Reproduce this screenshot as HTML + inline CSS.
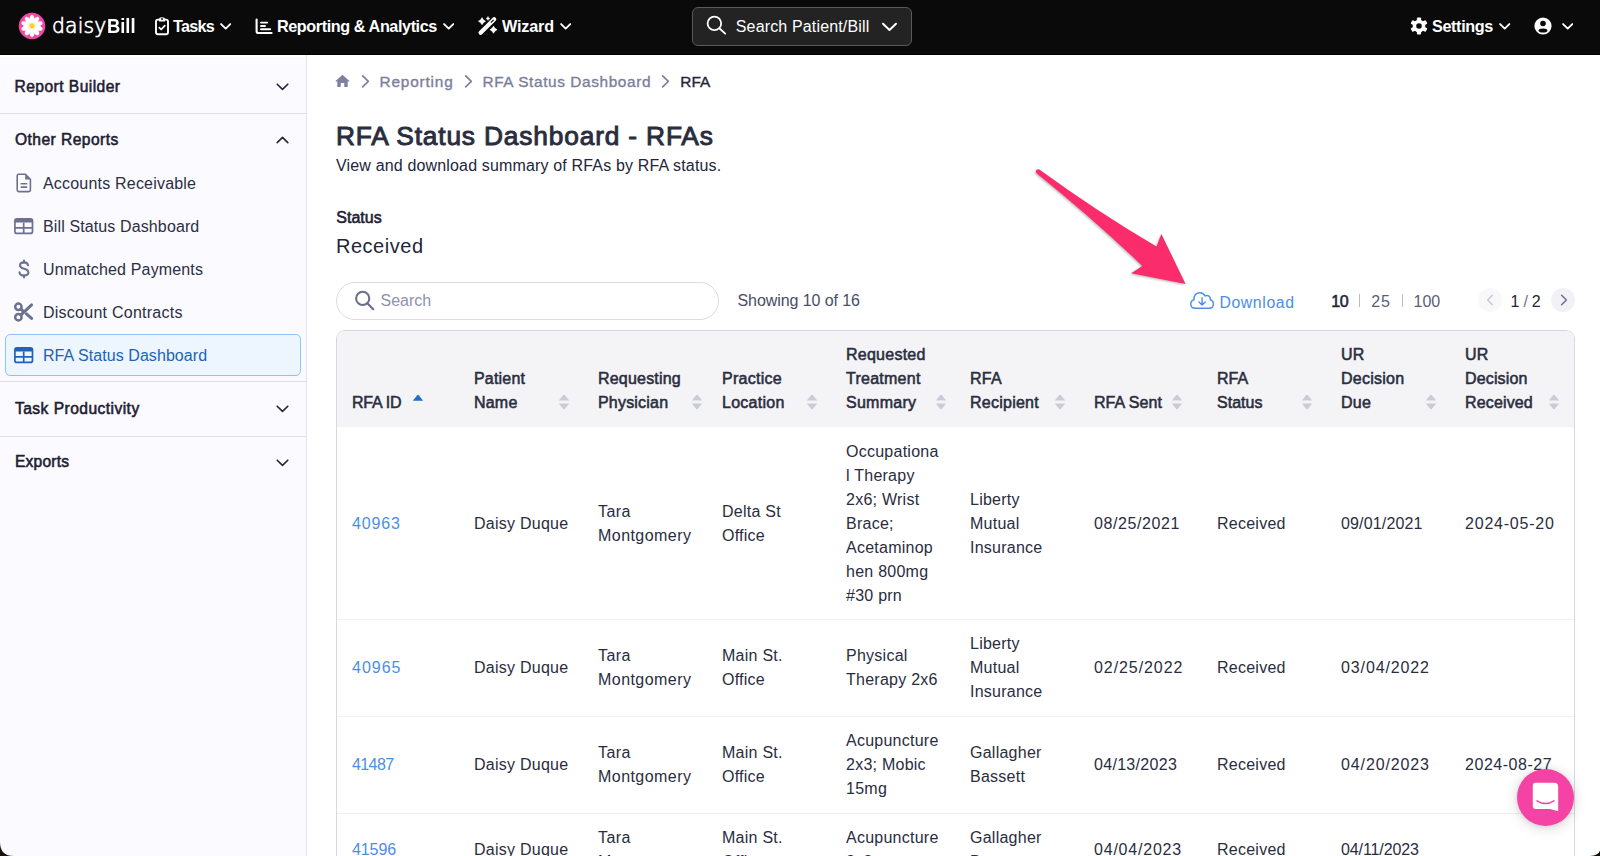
<!DOCTYPE html>
<html lang="en">
<head>
<meta charset="utf-8">
<title>RFA Status Dashboard - RFAs</title>
<style>
*{box-sizing:border-box;margin:0;padding:0}
html,body{width:1600px;height:856px;overflow:hidden;background:#fff}
body{font-family:"Liberation Sans",Arial,sans-serif;font-size:16px;color:#23263a;position:relative}
svg{display:block}
a{text-decoration:none;color:inherit}

/* ---------- NAVBAR ---------- */
#nav{position:absolute;left:0;top:0;width:1600px;height:54.5px;background:#0a0a0a;border-bottom:1.5px solid #000;color:#fff;z-index:5}
#nav .it{position:absolute;top:0;height:53px;display:flex;align-items:center;font-weight:700;font-size:16.2px;white-space:nowrap}
#nav .it svg{position:absolute}
#nav .ab{position:absolute}
#logo-t{position:absolute;left:0;top:0;color:#fff}
#lg1{position:absolute;left:52px;top:10.9px;font-family:"DejaVu Sans","Liberation Sans",sans-serif;font-weight:200;font-size:20.4px;line-height:30px;letter-spacing:.1px;-webkit-text-stroke:.65px #fff}
#lg2{position:absolute;left:106.9px;top:11.3px;font-weight:700;font-size:20.4px;line-height:30px;display:inline-block;transform-origin:0 50%;transform:scaleX(.9)}
#nsearch{position:absolute;left:691.8px;top:7.3px;width:220.2px;height:38.4px;border:1.2px solid #5a5a5a;border-radius:6px;background:#232323}
#nsearch span{position:absolute;left:43px;top:0;line-height:37.6px;font-size:16px;letter-spacing:.15px;color:#fff}

/* ---------- SIDEBAR ---------- */
#side{position:absolute;left:0;top:54px;width:307px;height:802px;background:#fafaff;border-right:1px solid #e3e3ea}
#side .sec{position:absolute;left:15px;font-weight:400;-webkit-text-stroke:.55px currentColor;font-size:15.6px;letter-spacing:.45px;line-height:20px;color:#1d2030;white-space:nowrap}
#side::before{content:"";position:absolute;left:0;top:0;width:306px;height:2.6px;background:#fff}
#side .hr{position:absolute;left:0;width:306px;height:1px;background:#dfe0e6}
#side .li{position:absolute;left:43px;font-size:16px;line-height:20px;letter-spacing:.2px;color:#2c2f42;white-space:nowrap}
#side .ic{position:absolute}
#side .chev{position:absolute;left:275.8px}
#active{position:absolute;left:5px;top:279.8px;width:295.8px;height:42.2px;border:1px solid #8fc4f8;border-radius:5px;background:#edf5fe}

/* ---------- MAIN ---------- */
#main{position:absolute;left:307px;top:54px;width:1293px;height:802px;background:#fff}
.abs{position:absolute;white-space:nowrap}
#crumb{position:absolute;left:0;top:0}
#crumb .c{position:absolute;top:17.5px;line-height:20px;font-size:15.4px;color:#7b7f9c;white-space:nowrap;letter-spacing:.6px;-webkit-text-stroke:.35px currentColor}
h1{position:absolute;left:28.9px;top:63.6px;font-size:26.3px;line-height:36px;font-weight:400;-webkit-text-stroke:.95px currentColor;letter-spacing:.84px;color:#2a2d3e;white-space:nowrap}
#sub{left:29px;top:102px;font-size:16px;line-height:20px;letter-spacing:.16px;color:#23263a}
#stl{left:29.3px;top:153.8px;font-size:16px;line-height:20px;font-weight:400;-webkit-text-stroke:.55px currentColor;color:#1d2030;letter-spacing:0}
#stv{left:28.9px;top:179.1px;font-size:20px;line-height:26px;letter-spacing:.55px;color:#23263a}
#sbox{position:absolute;left:29px;top:227.5px;width:382.6px;height:38.4px;border:1px solid #dadbe4;border-radius:20px;background:#fff}
#sbox span{position:absolute;left:43.5px;top:0;line-height:36.4px;font-size:16px;color:#8e92ab;letter-spacing:0}
#showing{left:430.5px;top:237.2px;font-size:16px;line-height:20px;letter-spacing:-.08px;color:#4a4d63}
#dl{left:912.4px;top:238.7px;font-size:15.8px;line-height:20px;color:#4a8fe7;letter-spacing:.62px}
.pg{font-size:16px;line-height:20px;top:237.6px;color:#5b5e75}

/* ---------- TABLE ---------- */
#tbl{position:absolute;left:29px;top:275.5px;width:1239px;height:600px;border:1px solid #d6d8e1;border-radius:9px 9px 0 0;overflow:hidden;background:#fff}
#thead{position:absolute;left:0;top:0;width:1237px;height:96px;background:#f4f4f7}
#thead + .row{border-top-color:transparent}
.th{position:absolute;font-weight:400;-webkit-text-stroke:.55px currentColor;font-size:16px;line-height:24px;color:#2a2d3e;white-space:nowrap;margin-top:1.2px}
.sort{position:absolute;top:63.5px}
.row{position:absolute;left:0;width:1237px;border-top:1px solid #efeff4}
.td{position:absolute;font-size:16px;line-height:24px;color:#2a2d3e;white-space:nowrap;letter-spacing:.25px}
.td.lnk{color:#4a8fe7}
</style>
</head>
<body>

<!-- NAVBAR -->
<div id="nav">
  <svg class="ab" style="left:18px;top:12.1px" width="28" height="28" viewBox="0 0 28 28">
    <circle cx="14" cy="14" r="13.25" fill="#f548a5"/>
    <g fill="#fff" transform="translate(14 14)"><ellipse cx="0" cy="-6.1" rx="2.5" ry="4.9" transform="rotate(0)"/><ellipse cx="0" cy="-6.1" rx="2.5" ry="4.9" transform="rotate(36)"/><ellipse cx="0" cy="-6.1" rx="2.5" ry="4.9" transform="rotate(72)"/><ellipse cx="0" cy="-6.1" rx="2.5" ry="4.9" transform="rotate(108)"/><ellipse cx="0" cy="-6.1" rx="2.5" ry="4.9" transform="rotate(144)"/><ellipse cx="0" cy="-6.1" rx="2.5" ry="4.9" transform="rotate(180)"/><ellipse cx="0" cy="-6.1" rx="2.5" ry="4.9" transform="rotate(216)"/><ellipse cx="0" cy="-6.1" rx="2.5" ry="4.9" transform="rotate(252)"/><ellipse cx="0" cy="-6.1" rx="2.5" ry="4.9" transform="rotate(288)"/><ellipse cx="0" cy="-6.1" rx="2.5" ry="4.9" transform="rotate(324)"/><circle r="4" fill="#ffe9f4"/></g>
    <circle cx="14" cy="14" r="2.5" fill="#ffd41c"/>
  </svg>
  <div id="logo-t"><span id="lg1">daisy</span><span id="lg2">Bill</span></div>


  <!-- clipboard-check -->
  <svg class="ab" style="left:154px;top:16px" width="16" height="20" viewBox="0 0 16 20">
    <rect x="2" y="3.6" width="12" height="14.6" rx="2" fill="none" stroke="#fff" stroke-width="1.9"/>
    <path d="M5 3.6 Q5 1.2 8 1.2 Q11 1.2 11 3.6 L11 5.4 L5 5.4Z" fill="#fff"/>
    <circle cx="8" cy="3" r=".9" fill="#0b0b0b"/>
    <path d="M5.3 11.6 L7.2 13.5 L10.8 9.6" fill="none" stroke="#fff" stroke-width="1.7" stroke-linecap="round" stroke-linejoin="round"/>
  </svg>
  <svg class="ab" style="left:219.8px;top:22.7px" width="11.4" height="7" viewBox="0 0 11.4 7"><path d="M1.1 1.1 L5.7 5.6 L10.3 1.1" fill="none" stroke="#fff" stroke-width="1.9" stroke-linecap="round" stroke-linejoin="round"/></svg>
  <!-- chart bars -->
  <svg class="ab" style="left:254px;top:16.6px" width="20" height="20" viewBox="0 0 20 20">
    <path d="M2.6 2.6 L2.6 14.2 Q2.6 16 4.4 16 L17.6 16" fill="none" stroke="#fff" stroke-width="2.1" stroke-linecap="round"/>
    <path d="M7 5.6 L13.2 5.6 M7 9 L11 9 M7 12.3 L16.2 12.3" fill="none" stroke="#fff" stroke-width="1.9" stroke-linecap="round"/>
  </svg>
  <svg class="ab" style="left:442.8px;top:22.7px" width="11.4" height="7" viewBox="0 0 11.4 7"><path d="M1.1 1.1 L5.7 5.6 L10.3 1.1" fill="none" stroke="#fff" stroke-width="1.9" stroke-linecap="round" stroke-linejoin="round"/></svg>
  <!-- magic wand -->
  <svg class="ab" style="left:476px;top:15px" width="22" height="22" viewBox="0 0 22 22">
    <path d="M4.6 17.8 L18.2 4.2" stroke="#fff" stroke-width="4.2" stroke-linecap="round"/>
    <path d="M15.3 7.1 L17.3 5.1" stroke="#0b0b0b" stroke-width="1.3" stroke-linecap="round"/>
    <path d="M6 2.6 Q7.008 5.192 9.6 6.2 Q7.008 7.208 6 9.8 Q4.992 7.208 2.4 6.2 Q4.992 5.192 6 2.6Z" fill="#fff" stroke="#fff" stroke-width=".5" stroke-linejoin="round"/>
    <path d="M12 1.6 Q12.532 2.968 13.9 3.5 Q12.532 4.032 12 5.4 Q11.468 4.032 10.1 3.5 Q11.468 2.968 12 1.6Z" fill="#fff" stroke="#fff" stroke-width=".5" stroke-linejoin="round"/>
    <path d="M17.5 11.1 Q18.508 13.691999999999998 21.1 14.7 Q18.508 15.708 17.5 18.3 Q16.492 15.708 13.9 14.7 Q16.492 13.691999999999998 17.5 11.1Z" fill="#fff" stroke="#fff" stroke-width=".5" stroke-linejoin="round"/>
  </svg>
  <svg class="ab" style="left:559.8px;top:22.7px" width="11.4" height="7" viewBox="0 0 11.4 7"><path d="M1.1 1.1 L5.7 5.6 L10.3 1.1" fill="none" stroke="#fff" stroke-width="1.9" stroke-linecap="round" stroke-linejoin="round"/></svg>
  <!-- gear -->
  <svg class="ab" style="left:1409px;top:16px" width="20" height="20" viewBox="-10 -10 20 20">
    <g fill="#fff">
      <circle r="6.3"/>
      <rect x="-2.1" y="-8.6" width="4.2" height="17.2" rx="1"/>
      <rect x="-2.1" y="-8.6" width="4.2" height="17.2" rx="1" transform="rotate(60)"/>
      <rect x="-2.1" y="-8.6" width="4.2" height="17.2" rx="1" transform="rotate(120)"/>
    </g>
    <circle r="2.8" fill="#0b0b0b"/>
  </svg>
  <svg class="ab" style="left:1499.3px;top:22.9px" width="11.4" height="7" viewBox="0 0 11.4 7"><path d="M1.1 1.1 L5.7 5.6 L10.3 1.1" fill="none" stroke="#fff" stroke-width="1.9" stroke-linecap="round" stroke-linejoin="round"/></svg>
  <!-- user -->
  <svg class="ab" style="left:1533px;top:16px" width="20" height="20" viewBox="-10 -10 20 20">
    <circle r="8.6" fill="#fff"/>
    <circle cy="-2.5" r="2.8" fill="#0b0b0b"/>
    <ellipse cy="4.5" rx="4.4" ry="2" fill="#0b0b0b"/>
  </svg>
  <svg class="ab" style="left:1561.9px;top:22.9px" width="11.4" height="7" viewBox="0 0 11.4 7"><path d="M1.1 1.1 L5.7 5.6 L10.3 1.1" fill="none" stroke="#fff" stroke-width="1.9" stroke-linecap="round" stroke-linejoin="round"/></svg>
  <div class="it" style="left:173px;letter-spacing:-.75px">Tasks</div>
  <div class="it" style="left:277px;letter-spacing:-.41px">Reporting &amp; Analytics</div>
  <div class="it" style="left:502px;letter-spacing:-.17px">Wizard</div>
  <div id="nsearch">
    <svg class="ab" style="left:12.4px;top:5.1px" width="24" height="24" viewBox="0 0 24 24"><circle cx="9.4" cy="10.4" r="6.8" fill="none" stroke="#fff" stroke-width="1.8"/><path d="M14.3 15.3 L20.2 20.6" stroke="#fff" stroke-width="1.9" stroke-linecap="round"/></svg>
    <span>Search Patient/Bill</span>
    <svg class="ab" style="left:188px;top:14px" width="17" height="11" viewBox="0 0 17 11"><path d="M2 1.7 L8.5 8 L15 1.7" fill="none" stroke="#fff" stroke-width="2" stroke-linecap="round" stroke-linejoin="round"/></svg>
  </div>
  <div class="it" style="left:1432px;letter-spacing:-.36px">Settings</div>
</div>

<!-- SIDEBAR -->
<div id="side">

  <svg class="chev" style="top:28.5px" width="13" height="8" viewBox="0 0 13 8"><path d="M1.2 1.2 L6.5 6.4 L11.8 1.2" fill="none" stroke="#23263a" stroke-width="1.6" stroke-linecap="round" stroke-linejoin="round"/></svg>
  <svg class="chev" style="top:81.5px" width="13" height="8" viewBox="0 0 13 8"><path d="M1.2 6.6 L6.5 1.4 L11.8 6.6" fill="none" stroke="#23263a" stroke-width="1.6" stroke-linecap="round" stroke-linejoin="round"/></svg>
  <svg class="chev" style="top:351px" width="13" height="8" viewBox="0 0 13 8"><path d="M1.2 1.2 L6.5 6.4 L11.8 1.2" fill="none" stroke="#23263a" stroke-width="1.6" stroke-linecap="round" stroke-linejoin="round"/></svg>
  <svg class="chev" style="top:405px" width="13" height="8" viewBox="0 0 13 8"><path d="M1.2 1.2 L6.5 6.4 L11.8 1.2" fill="none" stroke="#23263a" stroke-width="1.6" stroke-linecap="round" stroke-linejoin="round"/></svg>
  <!-- document -->
  <svg class="ic" style="left:16px;top:119px" width="16" height="20" viewBox="0 0 16 20"><path d="M2.8 1.2 L9.4 1.2 L14.4 6.2 L14.4 17 Q14.4 18.6 12.8 18.6 L2.8 18.6 Q1.2 18.6 1.2 17 L1.2 2.8 Q1.2 1.2 2.8 1.2Z" fill="none" stroke="#6d7190" stroke-width="1.6" stroke-linejoin="round"/><path d="M9.2 1.4 L9.2 6.4 L14.2 6.4Z" fill="#6d7190"/><path d="M5.2 10.7 L10.6 10.7 M5.2 14.1 L10.6 14.1" stroke="#6d7190" stroke-width="1.6" stroke-linecap="round"/></svg>
  <svg class="ic" style="left:14.2px;top:163.6px" width="19.4" height="17" viewBox="0 0 19.4 17"><rect x=".9" y=".9" width="17.6" height="14.5" rx="2" fill="none" stroke="#6d7190" stroke-width="1.7"/><path d="M.9 2.9 Q.9 .9 2.9 .9 L16.5 .9 Q18.5 .9 18.5 2.9 L18.5 4.5 L.9 4.5Z" fill="#6d7190"/><path d="M9.7 4.4 L9.7 15.2 M.9 9.9 L18.5 9.9" stroke="#6d7190" stroke-width="1.7"/></svg>
  <!-- dollar -->
  <svg class="ic" style="left:17px;top:205px" width="14" height="20" viewBox="0 0 14 20"><path d="M11 6.3 Q10.6 3.4 7 3.4 Q3 3.4 3 6.3 Q3 8.8 7 9.7 Q11.4 10.7 11.4 13.6 Q11.4 16.6 7 16.6 Q2.8 16.6 2.5 13.4" fill="none" stroke="#6d7190" stroke-width="2.1" stroke-linecap="round"/><path d="M7 1.6 L7 3.6 M7 16.4 L7 18.4" stroke="#6d7190" stroke-width="2" stroke-linecap="round"/></svg>
  <!-- scissors -->
  <svg class="ic" style="left:13px;top:247px" width="22" height="22" viewBox="0 0 22 22"><circle cx="5.4" cy="5.8" r="3.2" fill="none" stroke="#6d7190" stroke-width="2.5"/><circle cx="5.4" cy="16.2" r="3.2" fill="none" stroke="#6d7190" stroke-width="2.5"/><path d="M8 13.8 L18.6 3.9" stroke="#6d7190" stroke-width="3" stroke-linecap="round"/><path d="M8 8.2 L10.6 10.7 M13.4 12.9 L18.6 17.4" stroke="#6d7190" stroke-width="3" stroke-linecap="round"/></svg>
  <div class="sec" style="top:22.6px;left:14.5px">Report Builder</div>
  <div class="hr" style="top:59px"></div>
  <div class="sec" style="top:76px">Other Reports</div>
  <div class="li" style="top:119.6px">Accounts Receivable</div>
  <div class="li" style="top:163.1px;letter-spacing:.12px">Bill Status Dashboard</div>
  <div class="li" style="top:206px;letter-spacing:.15px">Unmatched Payments</div>
  <div class="li" style="top:248.8px;letter-spacing:.25px">Discount Contracts</div>
  <div id="active"></div>
  <svg class="ic" style="left:14.2px;top:292.9px" width="19.4" height="17" viewBox="0 0 19.4 17"><rect x=".9" y=".9" width="17.6" height="14.5" rx="2" fill="none" stroke="#1f63b8" stroke-width="1.7"/><path d="M.9 2.9 Q.9 .9 2.9 .9 L16.5 .9 Q18.5 .9 18.5 2.9 L18.5 4.5 L.9 4.5Z" fill="#1f63b8"/><path d="M9.7 4.4 L9.7 15.2 M.9 9.9 L18.5 9.9" stroke="#1f63b8" stroke-width="1.7"/></svg>
  <div class="li" style="top:292.3px;color:#1b63b8;letter-spacing:.07px">RFA Status Dashboard</div>
  <div class="hr" style="top:327.2px"></div>
  <div class="sec" style="top:345px">Task Productivity</div>
  <div class="hr" style="top:381.5px"></div>
  <div class="sec" style="top:398px;letter-spacing:.2px">Exports</div>
</div>

<!-- MAIN -->
<div id="main">
  <div id="crumb">
    <svg class="abs" style="left:28.2px;top:20px" width="15" height="14" viewBox="0 0 15 14"><path d="M7.5 .8 L14.4 7 Q14.7 7.6 14 7.6 L12.7 7.6 L12.7 12.4 Q12.7 13 12.1 13 L9.3 13 L9.3 9 L5.7 9 L5.7 13 L2.9 13 Q2.3 13 2.3 12.4 L2.3 7.6 L1 7.6 Q.3 7.6 .6 7Z" fill="#7d819e"/></svg>
    <svg class="abs" style="left:54px;top:19.6px" width="10" height="15" viewBox="0 0 10 15"><path d="M1.7 1.8 L7.3 7.3 L1.7 12.8" fill="none" stroke="#7d819e" stroke-width="1.7" stroke-linecap="round" stroke-linejoin="round"/></svg>
    <svg class="abs" style="left:157px;top:19.6px" width="10" height="15" viewBox="0 0 10 15"><path d="M1.7 1.8 L7.3 7.3 L1.7 12.8" fill="none" stroke="#7d819e" stroke-width="1.7" stroke-linecap="round" stroke-linejoin="round"/></svg>
    <svg class="abs" style="left:354.4px;top:19.6px" width="10" height="15" viewBox="0 0 10 15"><path d="M1.7 1.8 L7.3 7.3 L1.7 12.8" fill="none" stroke="#7d819e" stroke-width="1.7" stroke-linecap="round" stroke-linejoin="round"/></svg>
    <span class="c" style="left:72.6px;letter-spacing:.8px">Reporting</span>
    <span class="c" style="left:175.5px">RFA Status Dashboard</span>
    <span class="c" style="left:373.2px;color:#23263a;letter-spacing:.1px">RFA</span>
  </div>
  <h1>RFA Status Dashboard - RFAs</h1>
  <div class="abs" id="sub">View and download summary of RFAs by RFA status.</div>
  <div class="abs" id="stl">Status</div>
  <div class="abs" id="stv">Received</div>
  <div id="sbox"><svg class="abs" style="left:17px;top:7.6px" width="22" height="22" viewBox="0 0 22 22"><circle cx="8.7" cy="8.4" r="6.6" fill="none" stroke="#6b6f8e" stroke-width="2.1"/><path d="M13.6 13.4 L19.2 19.2" stroke="#6b6f8e" stroke-width="2.2" stroke-linecap="round"/></svg><span>Search</span></div>
  <div class="abs" id="showing">Showing 10 of 16</div>
  <svg class="abs" style="left:882px;top:236.5px" width="26" height="20" viewBox="0 0 26 20"><path d="M6.4 17.3 Q1.8 17.3 1.8 13 Q1.8 9.6 5 8.8 Q4.8 2.2 10.6 1.8 Q14.4 1.6 16 5 Q18.4 3.6 20.4 5.6 Q21.8 7 21.2 8.8 Q24.4 9.6 24.4 13 Q24.4 17.3 19.8 17.3Z" fill="none" stroke="#4a8fe7" stroke-width="1.4" stroke-linejoin="round"/><path d="M13.1 6.8 L13.1 13.8 M10 11 L13.1 14.1 L16.2 11" fill="none" stroke="#4a8fe7" stroke-width="1.4" stroke-linecap="round" stroke-linejoin="round"/></svg>
  <div class="abs" id="dl">Download</div>
  <div class="abs pg" style="left:1024.3px;-webkit-text-stroke:.55px currentColor;color:#23263a;letter-spacing:-.5px">10</div>
  <div class="abs" style="left:1052px;top:240.4px;width:1.1px;height:12.2px;background:#b9bbc9;font-size:0">|</div>
  <div class="abs pg" style="left:1064.3px;letter-spacing:.7px">25</div>
  <div class="abs" style="left:1094.7px;top:240.4px;width:1.1px;height:12.2px;background:#b9bbc9;font-size:0">|</div>
  <div class="abs pg" style="left:1106.5px">100</div>
  <div class="abs" style="left:1171px;top:234.4px;width:24px;height:24px;border-radius:12px;background:#f8f8fa"><svg style="margin:6px 0 0 7.5px" width="8" height="12" viewBox="0 0 8 12"><path d="M6.4 1.2 L1.6 6 L6.4 10.8" fill="none" stroke="#c6c8d4" stroke-width="1.4" stroke-linecap="round" stroke-linejoin="round"/></svg></div>
  <div class="abs pg" style="left:1203.5px;color:#23263a">1<span style="color:#6d7190;margin:0 4px">/</span>2</div>
  <div class="abs" style="left:1244px;top:234.4px;width:24px;height:24px;border-radius:12px;background:#f2f2f6"><svg style="margin:6px 0 0 8.5px" width="8" height="12" viewBox="0 0 8 12"><path d="M1.6 1.2 L6.4 6 L1.6 10.8" fill="none" stroke="#6d7190" stroke-width="1.5" stroke-linecap="round" stroke-linejoin="round"/></svg></div>

  <div id="tbl">
    <div id="thead">
    <div class="th" style="left:15px;top:59px;letter-spacing:-0.24px">RFA ID</div>
    <div class="th" style="left:137px;top:35px;letter-spacing:0.2px">Patient<br>Name</div>
    <div class="th" style="left:261px;top:35px;letter-spacing:0.2px">Requesting<br>Physician</div>
    <div class="th" style="left:385px;top:35px;letter-spacing:0.27px">Practice<br>Location</div>
    <div class="th" style="left:509px;top:11px;letter-spacing:0.25px">Requested<br>Treatment<br>Summary</div>
    <div class="th" style="left:633px;top:35px;letter-spacing:0.25px">RFA<br>Recipient</div>
    <div class="th" style="left:757px;top:59px;letter-spacing:0.04px">RFA Sent</div>
    <div class="th" style="left:880px;top:35px;letter-spacing:0.03px">RFA<br>Status</div>
    <div class="th" style="left:1004px;top:11px;letter-spacing:0.25px">UR<br>Decision<br>Due</div>
    <div class="th" style="left:1128px;top:11px;letter-spacing:0.15px">UR<br>Decision<br>Received</div>
    <svg class="sort" style="left:75px;top:63px" width="12" height="7" viewBox="0 0 12 7"><path d="M1.2 6.2 L5.3 1.2 Q6 .5 6.7 1.2 L10.8 6.2 Q11.2 6.8 10.3 6.8 L1.7 6.8 Q.8 6.8 1.2 6.2Z" fill="#1f6fc5"/></svg>
    <svg class="sort" style="left:221.4px;top:63px" width="12" height="16" viewBox="0 0 12 16"><path d="M1.2 6 L5.3 1 Q6 .3 6.7 1 L10.8 6 Q11.2 6.6 10.3 6.6 L1.7 6.6 Q.8 6.6 1.2 6Z" fill="#cbcbd8"/><path d="M1.2 10 L5.3 15 Q6 15.7 6.7 15 L10.8 10 Q11.2 9.4 10.3 9.4 L1.7 9.4 Q.8 9.4 1.2 10Z" fill="#cbcbd8"/></svg>
    <svg class="sort" style="left:354.4px;top:63px" width="12" height="16" viewBox="0 0 12 16"><path d="M1.2 6 L5.3 1 Q6 .3 6.7 1 L10.8 6 Q11.2 6.6 10.3 6.6 L1.7 6.6 Q.8 6.6 1.2 6Z" fill="#cbcbd8"/><path d="M1.2 10 L5.3 15 Q6 15.7 6.7 15 L10.8 10 Q11.2 9.4 10.3 9.4 L1.7 9.4 Q.8 9.4 1.2 10Z" fill="#cbcbd8"/></svg>
    <svg class="sort" style="left:469.0px;top:63px" width="12" height="16" viewBox="0 0 12 16"><path d="M1.2 6 L5.3 1 Q6 .3 6.7 1 L10.8 6 Q11.2 6.6 10.3 6.6 L1.7 6.6 Q.8 6.6 1.2 6Z" fill="#cbcbd8"/><path d="M1.2 10 L5.3 15 Q6 15.7 6.7 15 L10.8 10 Q11.2 9.4 10.3 9.4 L1.7 9.4 Q.8 9.4 1.2 10Z" fill="#cbcbd8"/></svg>
    <svg class="sort" style="left:597.8px;top:63px" width="12" height="16" viewBox="0 0 12 16"><path d="M1.2 6 L5.3 1 Q6 .3 6.7 1 L10.8 6 Q11.2 6.6 10.3 6.6 L1.7 6.6 Q.8 6.6 1.2 6Z" fill="#cbcbd8"/><path d="M1.2 10 L5.3 15 Q6 15.7 6.7 15 L10.8 10 Q11.2 9.4 10.3 9.4 L1.7 9.4 Q.8 9.4 1.2 10Z" fill="#cbcbd8"/></svg>
    <svg class="sort" style="left:716.6px;top:63px" width="12" height="16" viewBox="0 0 12 16"><path d="M1.2 6 L5.3 1 Q6 .3 6.7 1 L10.8 6 Q11.2 6.6 10.3 6.6 L1.7 6.6 Q.8 6.6 1.2 6Z" fill="#cbcbd8"/><path d="M1.2 10 L5.3 15 Q6 15.7 6.7 15 L10.8 10 Q11.2 9.4 10.3 9.4 L1.7 9.4 Q.8 9.4 1.2 10Z" fill="#cbcbd8"/></svg>
    <svg class="sort" style="left:834.4px;top:63px" width="12" height="16" viewBox="0 0 12 16"><path d="M1.2 6 L5.3 1 Q6 .3 6.7 1 L10.8 6 Q11.2 6.6 10.3 6.6 L1.7 6.6 Q.8 6.6 1.2 6Z" fill="#cbcbd8"/><path d="M1.2 10 L5.3 15 Q6 15.7 6.7 15 L10.8 10 Q11.2 9.4 10.3 9.4 L1.7 9.4 Q.8 9.4 1.2 10Z" fill="#cbcbd8"/></svg>
    <svg class="sort" style="left:964.4px;top:63px" width="12" height="16" viewBox="0 0 12 16"><path d="M1.2 6 L5.3 1 Q6 .3 6.7 1 L10.8 6 Q11.2 6.6 10.3 6.6 L1.7 6.6 Q.8 6.6 1.2 6Z" fill="#cbcbd8"/><path d="M1.2 10 L5.3 15 Q6 15.7 6.7 15 L10.8 10 Q11.2 9.4 10.3 9.4 L1.7 9.4 Q.8 9.4 1.2 10Z" fill="#cbcbd8"/></svg>
    <svg class="sort" style="left:1088.4px;top:63px" width="12" height="16" viewBox="0 0 12 16"><path d="M1.2 6 L5.3 1 Q6 .3 6.7 1 L10.8 6 Q11.2 6.6 10.3 6.6 L1.7 6.6 Q.8 6.6 1.2 6Z" fill="#cbcbd8"/><path d="M1.2 10 L5.3 15 Q6 15.7 6.7 15 L10.8 10 Q11.2 9.4 10.3 9.4 L1.7 9.4 Q.8 9.4 1.2 10Z" fill="#cbcbd8"/></svg>
    <svg class="sort" style="left:1211.2px;top:63px" width="12" height="16" viewBox="0 0 12 16"><path d="M1.2 6 L5.3 1 Q6 .3 6.7 1 L10.8 6 Q11.2 6.6 10.3 6.6 L1.7 6.6 Q.8 6.6 1.2 6Z" fill="#cbcbd8"/><path d="M1.2 10 L5.3 15 Q6 15.7 6.7 15 L10.8 10 Q11.2 9.4 10.3 9.4 L1.7 9.4 Q.8 9.4 1.2 10Z" fill="#cbcbd8"/></svg>
    </div>
    <div class="row" style="top:96px;height:193px">
    <div class="td lnk" style="left:15px;top:84px;letter-spacing:0.87px">40963</div>
    <div class="td" style="left:137px;top:84px">Daisy Duque</div>
    <div class="td" style="left:261px;top:72px;letter-spacing:0.45px">Tara<br>Montgomery</div>
    <div class="td" style="left:385px;top:72px">Delta St<br>Office</div>
    <div class="td" style="left:509px;top:12px">Occupationa<br>l Therapy<br>2x6; Wrist<br>Brace;<br>Acetaminop<br>hen 800mg<br>#30 prn</div>
    <div class="td" style="left:633px;top:60px">Liberty<br>Mutual<br>Insurance</div>
    <div class="td" style="left:757px;top:84px;letter-spacing:0.58px">08/25/2021</div>
    <div class="td" style="left:880px;top:84px">Received</div>
    <div class="td" style="left:1004px;top:84px;letter-spacing:0.15px">09/01/2021</div>
    <div class="td" style="left:1128px;top:84px;letter-spacing:0.79px">2024-05-20</div>
    </div>
    <div class="row" style="top:288px;height:97px">
    <div class="td lnk" style="left:15px;top:36px;letter-spacing:1.0px">40965</div>
    <div class="td" style="left:137px;top:36px">Daisy Duque</div>
    <div class="td" style="left:261px;top:24px;letter-spacing:0.45px">Tara<br>Montgomery</div>
    <div class="td" style="left:385px;top:24px">Main St.<br>Office</div>
    <div class="td" style="left:509px;top:24px">Physical<br>Therapy 2x6</div>
    <div class="td" style="left:633px;top:12px">Liberty<br>Mutual<br>Insurance</div>
    <div class="td" style="left:757px;top:36px;letter-spacing:0.92px">02/25/2022</div>
    <div class="td" style="left:880px;top:36px">Received</div>
    <div class="td" style="left:1004px;top:36px;letter-spacing:0.88px">03/04/2022</div>
    </div>
    <div class="row" style="top:385px;height:97px">
    <div class="td lnk" style="left:15px;top:36px;letter-spacing:-0.6px">41487</div>
    <div class="td" style="left:137px;top:36px">Daisy Duque</div>
    <div class="td" style="left:261px;top:24px;letter-spacing:0.45px">Tara<br>Montgomery</div>
    <div class="td" style="left:385px;top:24px">Main St.<br>Office</div>
    <div class="td" style="left:509px;top:12px">Acupuncture<br>2x3; Mobic<br>15mg</div>
    <div class="td" style="left:633px;top:24px">Gallagher<br>Bassett</div>
    <div class="td" style="left:757px;top:36px;letter-spacing:0.3px">04/13/2023</div>
    <div class="td" style="left:880px;top:36px">Received</div>
    <div class="td" style="left:1004px;top:36px;letter-spacing:0.88px">04/20/2023</div>
    <div class="td" style="left:1128px;top:36px;letter-spacing:0.54px">2024-08-27</div>
    </div>
    <div class="row" style="top:482px;height:73px">
    <div class="td lnk" style="left:15px;top:24px;letter-spacing:-0.1px">41596</div>
    <div class="td" style="left:137px;top:24px">Daisy Duque</div>
    <div class="td" style="left:261px;top:12px;letter-spacing:0.45px">Tara<br>Montgomery</div>
    <div class="td" style="left:385px;top:12px">Main St.<br>Office</div>
    <div class="td" style="left:509px;top:12px">Acupuncture<br>2x3</div>
    <div class="td" style="left:633px;top:12px">Gallagher<br>Bassett</div>
    <div class="td" style="left:757px;top:24px;letter-spacing:0.79px">04/04/2023</div>
    <div class="td" style="left:880px;top:24px">Received</div>
    <div class="td" style="left:1004px;top:24px;letter-spacing:-0.1px">04/11/2023</div>
    </div>
  </div>
</div>

<!-- annotation arrow -->
<svg style="position:absolute;left:1020px;top:160px;overflow:visible" width="180" height="140" viewBox="1020 160 180 140">
  <path style="filter:drop-shadow(-.6px 1.2px 1px rgba(0,0,0,.28))" d="M1039.4 169.5 Q1096.1 210.9 1156.5 246.6 L1161.4 233.9 L1185.6 284 L1131.2 273.3 L1142.3 265.9 Q1091.3 217.2 1036.5 173.2 Q1035.2 171.4 1036.5 169.9 Q1037.9 168.7 1039.4 169.5Z" fill="#fb2c6b"/>
</svg>
<!-- chat launcher -->
<div style="position:absolute;left:1516.8px;top:769.2px;width:56.8px;height:56.8px;border-radius:50%;background:#f443a4;box-shadow:0 2px 14px rgba(0,0,0,.16),0 1px 5px rgba(0,0,0,.08)">
  <svg style="position:absolute;left:14px;top:12px" width="30" height="32" viewBox="0 0 30 32"><path d="M4.6 1.8 L23 1.8 Q27.2 1.8 27.2 6 L27.2 30.2 L19 27.9 L4.6 27.9 Q1.8 27.9 1.8 25 L1.8 4.6 Q1.8 1.8 4.6 1.8Z" fill="#fff"/><path d="M6 19.8 Q14.4 25.2 23 19.8" fill="none" stroke="#f443a4" stroke-width="1.5" stroke-linecap="round"/></svg>
</div>
<!-- window corners -->
<svg style="position:absolute;left:0;top:842px" width="14" height="14" viewBox="0 0 14 14"><path d="M0 0 Q0 14 14 14 L0 14Z" fill="#1c1409"/></svg>
<svg style="position:absolute;left:1586px;top:842px" width="14" height="14" viewBox="0 0 14 14"><path d="M14 8.6 Q12.6 13.6 4 14 L14 14Z" fill="#120d08"/></svg>

</body>
</html>
